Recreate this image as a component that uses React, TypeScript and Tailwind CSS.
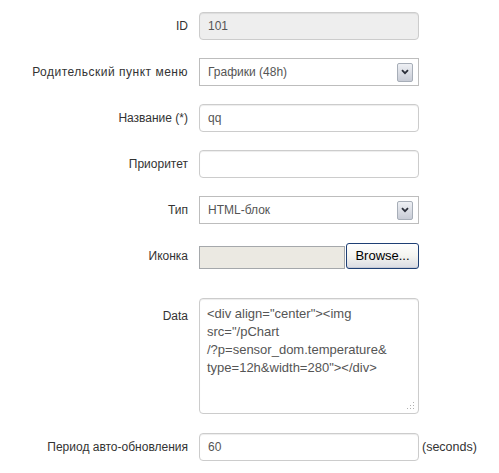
import React from 'react';

const font = { fontFamily: '"Liberation Sans", Arial, sans-serif' };

const Label: React.FC<{ text: string; wide?: boolean }> = ({ text, wide }) => (
  <div className={`w-[188px] shrink-0 text-right text-[12px] text-[#333] ${wide ? 'tracking-[0.5px]' : ''}`}>{text}</div>
);

const TextInput: React.FC<{ value?: string; disabled?: boolean }> = ({ value = '', disabled }) => (
  <div
    className={`flex h-[28px] w-[220px] items-center rounded-[4px] border border-[#cccccc] px-[8px] text-[12px] text-[#555] shadow-[inset_0_1px_1px_rgba(0,0,0,0.075)] ${
      disabled ? 'bg-[#eeeeee]' : 'bg-white'
    }`}
  >
    {value}
  </div>
);

const SelectBox: React.FC<{ value: string }> = ({ value }) => (
  <div className="flex h-[28px] w-[220px] items-center justify-between border border-[#bdbdbd] bg-white pl-[8px] pr-[5px] text-[12px] text-[#555]">
    <span>{value}</span>
    <div className="flex h-[19px] w-[16px] items-center justify-center rounded-[2px] border border-[#a7aeb8] bg-gradient-to-b from-[#eef0f4] to-[#c8ccd6]">
      <svg width="8" height="6" viewBox="0 0 8 6">
        <path d="M1 1.2 L4 4.2 L7 1.2" fill="none" stroke="#2b2f3a" strokeWidth="1.8" />
      </svg>
    </div>
  </div>
);

export default function App() {
  return (
    <div className="min-h-screen bg-white pt-[12px]" style={font}>
      <div className="flex items-center">
        <Label text="ID" />
        <div className="pl-[11px]">
          <TextInput value="101" disabled />
        </div>
      </div>

      <div className="mt-[18px] flex items-center">
        <Label text="Родительский пункт меню" wide />
        <div className="pl-[11px]">
          <SelectBox value="Графики (48h)" />
        </div>
      </div>

      <div className="mt-[18px] flex items-center">
        <Label text="Название (*)" />
        <div className="pl-[11px]">
          <TextInput value="qq" />
        </div>
      </div>

      <div className="mt-[18px] flex items-center">
        <Label text="Приоритет" />
        <div className="pl-[11px]">
          <TextInput />
        </div>
      </div>

      <div className="mt-[18px] flex items-center">
        <Label text="Тип" />
        <div className="pl-[11px]">
          <SelectBox value="HTML-блок" />
        </div>
      </div>

      <div className="mt-[19px] flex items-center">
        <Label text="Иконка" />
        <div className="flex items-end pl-[11px]">
          <div className="h-[23px] w-[146px] border border-[#a5a8ab] bg-[#ebe9e2]" />
          <div className="ml-[1px] flex h-[26px] w-[73px] items-center justify-center rounded-[3px] border border-[#1e3f74] bg-gradient-to-b from-white via-[#f4f4f0] to-[#d9dbe3] text-[13px] text-black shadow-[inset_0_-1px_0_#c6cad6]">
            Browse...
          </div>
        </div>
      </div>

      <div className="mt-[29px] flex items-start">
        <div className="pt-[9px]">
          <Label text="Data" />
        </div>
        <div className="pl-[11px]">
          <div className="relative h-[116px] w-[220px] rounded-[4px] border border-[#cccccc] bg-white px-[7px] pt-[6px] text-[13px] leading-[18px] text-[#555] shadow-[inset_0_1px_1px_rgba(0,0,0,0.075)]">
            <div className="whitespace-pre">{'<div align="center"><img'}</div>
            <div className="whitespace-pre">{'src="/pChart'}</div>
            <div className="whitespace-pre">{'/?p=sensor_dom.temperature&'}</div>
            <div className="whitespace-pre">{'type=12h&width=280"></div>'}</div>
            <svg className="absolute bottom-[3px] right-[3px]" width="8" height="8" viewBox="0 0 8 8">
              <rect x="6" y="0" width="1" height="1" fill="#b0b0b0" />
              <rect x="3" y="3" width="1" height="1" fill="#b0b0b0" />
              <rect x="6" y="3" width="1" height="1" fill="#b0b0b0" />
              <rect x="0" y="6" width="1" height="1" fill="#b0b0b0" />
              <rect x="3" y="6" width="1" height="1" fill="#b0b0b0" />
              <rect x="6" y="6" width="1" height="1" fill="#b0b0b0" />
            </svg>
          </div>
        </div>
      </div>

      <div className="mt-[19px] flex items-center">
        <Label text="Период авто-обновления" />
        <div className="flex items-center pl-[11px]">
          <TextInput value="60" />
          <span className="ml-[3px] text-[12.5px] text-[#333]">(seconds)</span>
        </div>
      </div>
    </div>
  );
}
